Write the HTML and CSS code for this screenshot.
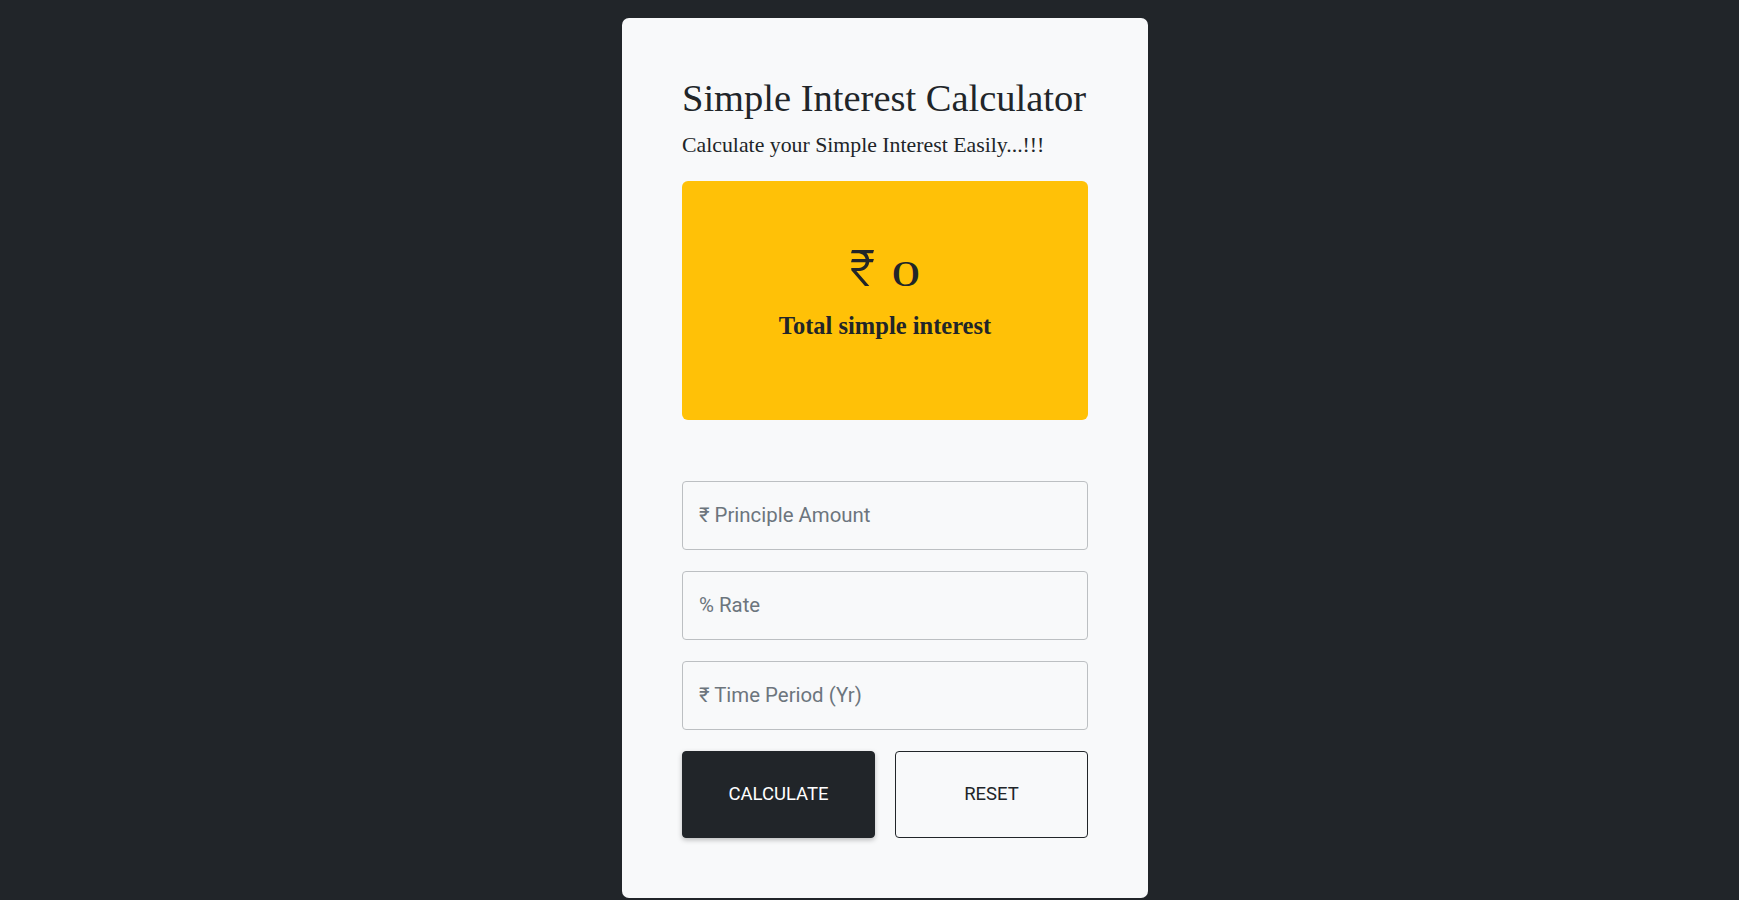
FILE: index.html
```html
<!DOCTYPE html>
<html lang="en">
<head>
<meta charset="utf-8">
<title>Simple Interest Calculator</title>
<link rel="stylesheet" href="styles.css">
</head>
<body>
<div class="page">
  <main class="card">
    <h2 class="title">Simple Interest Calculator</h2>
    <p class="subtitle">Calculate your Simple Interest Easily...!!!</p>
    <section class="result">
      <div class="amount"><span class="rupee">₹</span> <span class="zero">0</span></div>
      <div class="result-label">Total simple interest</div>
    </section>
    <form class="form">
      <input class="field" type="text" placeholder="₹ Principle Amount">
      <input class="field" type="text" placeholder="% Rate">
      <input class="field" type="text" placeholder="₹ Time Period (Yr)">
      <div class="actions">
        <button type="button" class="btn btn-dark">CALCULATE</button>
        <button type="button" class="btn btn-outline">RESET</button>
      </div>
    </form>
  </main>
</div>
</body>
</html>
```

FILE: styles.css
```css
html, body {
  margin: 0;
  padding: 0;
  background: #212529;
  height: 100%;
}

body {
  font-family: "Liberation Serif", "Times New Roman", serif;
  color: #212529;
}

.page {
  display: flex;
  justify-content: center;
  padding: 18px 0 0 31px;
}

.card {
  box-sizing: border-box;
  width: 526px;
  height: 880px;
  background: #f8f9fa;
  border-radius: 7px;
  padding: 57px 60px 60px;
  display: flex;
  flex-direction: column;
}

.title {
  margin: 0;
  font-weight: 400;
  font-size: 38.5px;
  line-height: 1.2;
  color: #212529;
}

.subtitle {
  margin: 8px 0 0;
  font-size: 21.8px;
  line-height: 1.5;
}

.result {
  margin-top: 19px;
  height: 239px;
  background: #ffc107;
  border-radius: 6px;
  display: flex;
  flex-direction: column;
  align-items: center;
  justify-content: center;
}

.amount {
  font-size: 48px;
  line-height: 1.2;
  display: flex;
  align-items: baseline;
  gap: 17px;
  margin-top: -20px;
}

.rupee {
  font-family: Inter, "Noto Sans", "DejaVu Sans", sans-serif;
  font-weight: 300;
  font-size: 49px;
}

.zero {
  display: inline-block;
  font-family: "Liberation Serif", serif;
  font-size: 36px;
  transform: scaleX(1.6);
  margin: 0 5px;
}

.result-label {
  margin-top: 12px;
  font-weight: 700;
  font-size: 24.5px;
  line-height: 1.2;
}

.form {
  margin: 61px 0 0;
  display: flex;
  flex-direction: column;
  gap: 21px;
}

.field {
  box-sizing: border-box;
  height: 69px;
  width: 100%;
  border: 1px solid #bcbfc2;
  border-radius: 4px;
  background: #f8f9fa;
  padding: 0 16px;
  font-family: Roboto, "Liberation Sans", sans-serif;
  font-size: 20.4px;
  color: #212529;
  outline: none;
}

.field::placeholder {
  color: #6c757d;
  opacity: 1;
}

.actions {
  display: grid;
  grid-template-columns: 1fr 1fr;
  gap: 20px;
}

.btn {
  height: 87px;
  border-radius: 4px;
  font-family: Roboto, "Liberation Sans", sans-serif;
  font-size: 18.5px;
  font-weight: 400;
  cursor: pointer;
}

.btn-dark {
  background: #212529;
  color: #ffffff;
  border: 1px solid #212529;
  box-shadow: 0 2px 5px rgba(0, 0, 0, 0.25);
}

.btn-outline {
  background: transparent;
  color: #212529;
  border: 1px solid #212529;
}
```
